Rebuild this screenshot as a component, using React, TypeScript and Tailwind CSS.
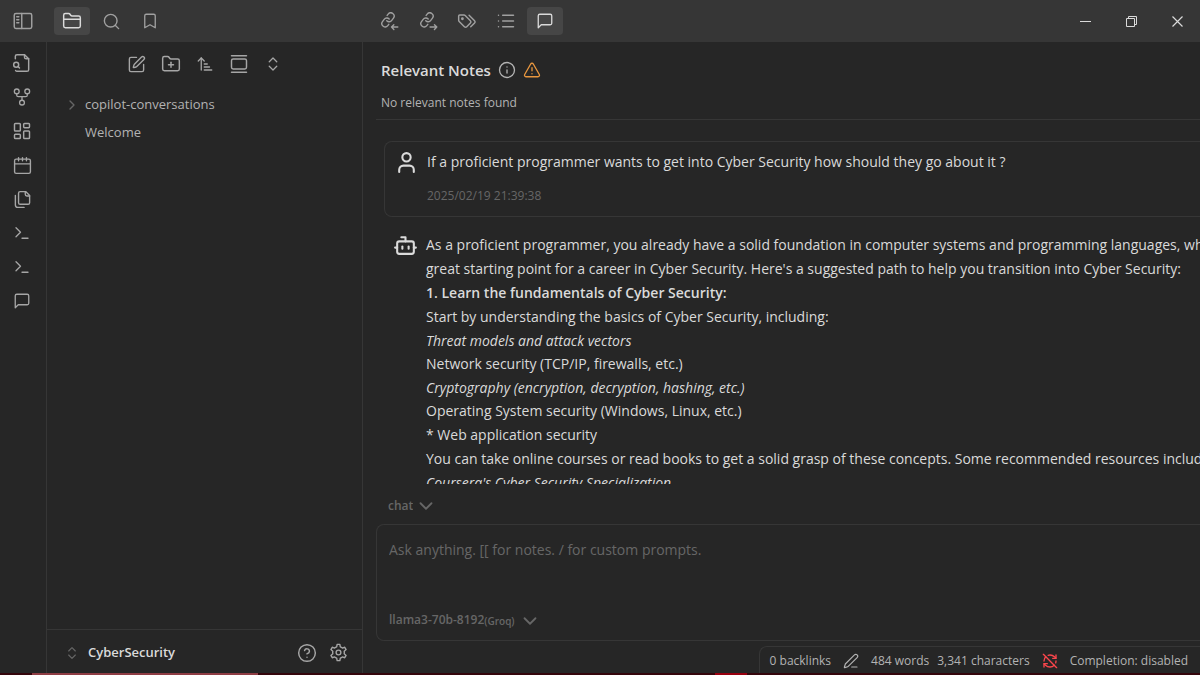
import type { ReactNode } from "react";
import {
  ArrowUpNarrowWide,
  Bookmark,
  Bot,
  ChevronDown,
  ChevronRight,
  ChevronsUpDown,
  CircleQuestionMark,
  FolderClosed,
  FolderPlus,
  GalleryVertical,
  Info,
  LayoutDashboard,
  List,
  PenLine,
  RefreshCwOff,
  Search,
  SquarePen,
  Terminal,
  TriangleAlert,
  User,
} from "lucide-react";
import clsx from "clsx";

type GlyphProps = { size?: number; children?: ReactNode };

const Glyph = ({ size = 18, children }: GlyphProps) => (
  <svg
    width={size}
    height={size}
    viewBox="0 0 24 24"
    fill="none"
    stroke="currentColor"
    strokeWidth={1.75}
    strokeLinecap="round"
    strokeLinejoin="round"
    aria-hidden="true"
  >
    {children}
  </svg>
);

const SidebarIcon = () => (
  <Glyph size={20}>
    <rect x="1.5" y="3" width="21" height="18" rx="2" />
    <path d="M10.5 3v18M4.5 7h2.500M4.500 10.500h2.500M4.500 14h2.500" />
  </Glyph>
);

const MessageIcon = () => (
  <Glyph>
    <path d="M21 15a2 2 0 0 1-2 2H7l-4 4V5a2 2 0 0 1 2-2h14a2 2 0 0 1 2 2z" />
  </Glyph>
);

const FileSearchIcon = () => (
  <Glyph size={20}>
    <path d="M15 2v3a2 2 0 0 0 2 2h3" />
    <path d="M4.3 21a2 2 0 0 0 1.7 1h12a2 2 0 0 0 2-2V7l-5-5H6a2 2 0 0 0-2 2v3" />
    <path d="m9 18-1.8-1.8" />
    <circle cx="5" cy="14" r="3" />
  </Glyph>
);

const GraphIcon = () => (
  <Glyph>
    <circle cx="5" cy="4.5" r="3.2" />
    <circle cx="19" cy="4.5" r="3.2" />
    <circle cx="12" cy="19.5" r="3.2" />
    <path d="M5 7.7v1.8a2 2 0 0 0 2 2h10a2 2 0 0 0 2-2V7.7M12 11.5v4.8" />
  </Glyph>
);

const CalendarIcon = () => (
  <Glyph size={19}>
    <rect x="2" y="4" width="20" height="18" rx="2" />
    <path d="M7 2v4M12 2v4M17 2v4M2 10h20" />
  </Glyph>
);

const FilesIcon = () => (
  <Glyph size={19}>
    <path d="M16 2H9a2 2 0 0 0-2 2v12a2 2 0 0 0 2 2h10a2 2 0 0 0 2-2V7z" />
    <path d="M15.5 2v3.500a2 2 0 0 0 2 2H21" />
    <path d="M3 7v12a3 3 0 0 0 3 3h8" />
  </Glyph>
);

const TagsIcon = () => (
  <Glyph size={20}>
    <path d="M2 6v5.200a2 2 0 0 0 .6 1.400l6.300 6.300a2 2 0 0 0 2.800 0l4.400-4.400a2 2 0 0 0 0-2.800L9.800 5.400A2 2 0 0 0 8.400 4.800H3.200A1.200 1.200 0 0 0 2 6z" />
    <path d="m14.500 5 6.600 6.600a2 2 0 0 1 0 2.800l-4.600 4.600" />
    <circle cx="6.500" cy="9.300" r=".8" fill="currentColor" />
  </Glyph>
);

// chain link with an arrow for the incoming / outgoing link panes
const LinksIcon = ({ incoming }: { incoming?: boolean }) => (
  <Glyph size={19}>
    <g transform="rotate(-8 9 10) scale(.84)" strokeWidth={2.1}>
      <path d="M10 13a5 5 0 0 0 7.540.540l3-3a5 5 0 0 0-7.070-7.070l-1.720 1.710" />
      <path d="M14 11a5 5 0 0 0-7.540-.540l-3 3a5 5 0 0 0 7.070 7.070l1.710-1.710" />
    </g>
    <path
      d={incoming ? "M22.500 19h-8M17.500 16l-3 3 3 3" : "M14 19h8.500M19.500 16l3 3-3 3"}
    />
  </Glyph>
);

const GearIcon = () => (
  <Glyph size={19}>
    <path d="M10.300 1.800h3.400l.6 3.100a7.500 7.500 0 0 1 2.600 1.500l3-1 1.700 2.900-2.400 2.100a7.500 7.500 0 0 1 0 3.200l2.400 2.100-1.700 2.900-3-1a7.500 7.500 0 0 1-2.600 1.500l-.6 3.100h-3.400l-.6-3.100a7.500 7.500 0 0 1-2.600-1.500l-3 1-1.700-2.900 2.400-2.100a7.500 7.500 0 0 1 0-3.200L2.400 8.300l1.700-2.900 3 1a7.500 7.500 0 0 1 2.600-1.500z" />
    <circle cx="12" cy="12" r="3" />
  </Glyph>
);

const lucide = { size: 18, strokeWidth: 1.75 };

const leftTabs = [
  { label: "Files", icon: <FolderClosed size={20} strokeWidth={1.75} />, active: true },
  { label: "Search", icon: <Search size={19} strokeWidth={1.75} /> },
  { label: "Bookmarks", icon: <Bookmark {...lucide} /> },
];

const rightTabs = [
  { label: "Backlinks", icon: <LinksIcon incoming /> },
  { label: "Outgoing links", icon: <LinksIcon /> },
  { label: "Tags", icon: <TagsIcon /> },
  { label: "Outline", icon: <List size={20} strokeWidth={1.75} /> },
  { label: "Copilot", icon: <MessageIcon />, active: true },
];

const ribbonItems = [
  { label: "Open quick switcher", icon: <FileSearchIcon /> },
  { label: "Open graph view", icon: <GraphIcon /> },
  { label: "Create new canvas", icon: <LayoutDashboard size={20} strokeWidth={1.75} /> },
  { label: "Open daily note", icon: <CalendarIcon /> },
  { label: "Insert template", icon: <FilesIcon /> },
  { label: "Command palette", icon: <Terminal {...lucide} /> },
  { label: "Open terminal", icon: <Terminal {...lucide} /> },
  { label: "Open Copilot chat", icon: <MessageIcon /> },
];

const fileActions = [
  { label: "New note", icon: <SquarePen size={19} strokeWidth={1.75} /> },
  { label: "New folder", icon: <FolderPlus size={20} strokeWidth={1.75} /> },
  { label: "Change sort order", icon: <ArrowUpNarrowWide {...lucide} /> },
  { label: "Auto-reveal current file", icon: <GalleryVertical size={20} strokeWidth={1.75} /> },
  { label: "Expand all", icon: <ChevronsUpDown {...lucide} /> },
];

type Tab = { label: string; icon: ReactNode; active?: boolean };

const TabButtons = ({ tabs }: { tabs: Tab[] }) => (
  <div className="flex gap-[3px]">
    {tabs.map((tab) => (
      <button
        key={tab.label}
        aria-label={tab.label}
        className={clsx(
          "flex h-7 w-9 items-center justify-center rounded",
          tab.active ? "bg-[#464646] text-[#dadada]" : "text-[#a0a0a0]"
        )}
      >
        {tab.icon}
      </button>
    ))}
  </div>
);

const TitleBar = () => (
  <header className="flex h-[42px] shrink-0 items-center bg-[#363636]">
    <div className="flex w-[363px] shrink-0 items-center">
      <button
        aria-label="Toggle sidebar"
        className="mr-2 flex w-[46px] items-center justify-center text-[#a0a0a0]"
      >
        <SidebarIcon />
      </button>
      <TabButtons tabs={leftTabs} />
    </div>
    <div className="flex flex-1 items-center justify-between pl-2">
      <TabButtons tabs={rightTabs} />
      <div className="flex text-[#dadada]">
        <button aria-label="Minimize" className="flex w-[46px] items-center justify-center">
          <svg width="11" height="11" viewBox="0 0 11 11" stroke="currentColor">
            <path d="M0 5.500h11" />
          </svg>
        </button>
        <button aria-label="Restore" className="flex w-[46px] items-center justify-center">
          <svg width="11" height="11" viewBox="0 0 11 11" fill="none" stroke="currentColor">
            <path d="M.5 2.500h8v8h-8zM2.500 2.500v-2h8v8h-2" />
          </svg>
        </button>
        <button aria-label="Close" className="flex w-[46px] items-center justify-center">
          <svg width="11" height="11" viewBox="0 0 11 11" stroke="currentColor" strokeWidth="1.2">
            <path d="m.5.5 10 10M10.500.5l-10 10" />
          </svg>
        </button>
      </div>
    </div>
  </header>
);

const Ribbon = () => (
  <nav className="flex w-[47px] shrink-0 flex-col items-center gap-2 border-r border-[#363636] pt-2 pr-0.5 text-[#a6a6a6]">
    {ribbonItems.map((item) => (
      <button
        key={item.label}
        aria-label={item.label}
        className="flex h-[26px] w-[26px] items-center justify-center"
      >
        {item.icon}
      </button>
    ))}
  </nav>
);

const FileExplorer = () => (
  <aside className="flex w-[316px] shrink-0 flex-col border-r border-[#363636]">
    <div className="flex justify-center gap-2 pt-2 text-[#a6a6a6]">
      {fileActions.map((action) => (
        <button
          key={action.label}
          aria-label={action.label}
          className="flex h-7 w-[26px] items-center justify-center"
        >
          {action.icon}
        </button>
      ))}
    </div>
    <div className="flex-1 pt-[13px] text-[13px] text-[#b3b3b3]">
      <button className="flex h-7 w-full items-center pl-[17px]">
        <ChevronRight size={16} strokeWidth={2} className="mr-[5px] text-[#666]" />
        copilot-conversations
      </button>
      <button className="flex h-7 w-full items-center pl-[38px]">Welcome</button>
    </div>
    <div className="flex h-11 items-center border-t border-[#363636] pt-0.5 pr-[14px] pl-[17px]">
      <button className="flex flex-1 items-center gap-2 text-[13px] font-semibold text-[#dadada]">
        <ChevronsUpDown size={16} strokeWidth={1.75} className="text-[#666]" />
        CyberSecurity
      </button>
      <div className="flex gap-3 text-[#a6a6a6]">
        <button aria-label="Help">
          <CircleQuestionMark size={20} strokeWidth={1.75} />
        </button>
        <button aria-label="Settings">
          <GearIcon />
        </button>
      </div>
    </div>
  </aside>
);

const UserMessage = () => (
  <article className="ml-2 flex rounded-l-lg border border-r-0 border-[#363636] pt-2 pb-2.5 pl-[9px]">
    <User size={25} strokeWidth={2} className="shrink-0" />
    <div className="ml-2">
      <p className="text-sm leading-6 whitespace-nowrap">
        If a proficient programmer wants to get into Cyber Security how should they go about it ?
      </p>
      <time className="mt-3 block text-xs leading-5 text-[#666]">2025/02/19 21:39:38</time>
    </div>
  </article>
);

const BotMessage = () => (
  <article className="mt-4 flex pl-[17px]">
    <Bot size={25} strokeWidth={2} className="shrink-0" />
    <div className="ml-2 text-sm leading-6 whitespace-nowrap">
      <p className="leading-6">
        As a proficient programmer, you already have a solid foundation in computer systems and
        programming languages, which is a
        <br />
        great starting point for a career in Cyber Security. Here's a suggested path to help you
        transition into Cyber Security:
      </p>
      <p>
        <strong className="font-semibold">1. Learn the fundamentals of Cyber Security:</strong>
      </p>
      <p>Start by understanding the basics of Cyber Security, including:</p>
      <p className="leading-[23px] italic">Threat models and attack vectors</p>
      <p>Network security (TCP/IP, firewalls, etc.)</p>
      <p className="leading-[23px] italic">Cryptography (encryption, decryption, hashing, etc.)</p>
      <p>Operating System security (Windows, Linux, etc.)</p>
      <p>* Web application security</p>
      <p>
        You can take online courses or read books to get a solid grasp of these concepts. Some
        recommended resources include:
      </p>
      <p className="leading-[23px] italic">Coursera's Cyber Security Specialization</p>
    </div>
  </article>
);

const ChatInput = () => (
  <form className="shrink-0 text-[#666]">
    <div className="flex h-10 items-center pt-[3px] pl-3 text-xs font-semibold">
      <select
        aria-label="Chat mode"
        className="appearance-none [field-sizing:content]"
        defaultValue="chat"
      >
        <option value="chat">chat</option>
      </select>
      <ChevronDown size={22} strokeWidth={2} className="ml-0.5" />
    </div>
    <div className="rounded-l-lg border border-r-0 border-[#363636] px-3 pt-[13px]">
      <textarea
        aria-label="Message"
        placeholder="Ask anything. [[ for notes. / for custom prompts."
        className="block h-[72px] w-full resize-none text-sm leading-6 outline-none placeholder:text-[#666]"
      />
      <div className="flex h-[30px] items-start text-xs font-semibold">
        <select
          id="model"
          className="appearance-none leading-5 [field-sizing:content]"
          defaultValue="llama3-70b-8192"
        >
          <option value="llama3-70b-8192">llama3-70b-8192</option>
        </select>
        <label htmlFor="model" className="text-[10px] leading-[22px]">
          (Groq)
        </label>
        <ChevronDown size={22} strokeWidth={2} className="ml-1" />
      </div>
    </div>
  </form>
);

const CopilotPane = () => (
  <main className="flex min-w-0 flex-1 flex-col pb-8 pl-[13px] text-[#dadada]">
    <section className="shrink-0 border-b border-[#363636] pt-4 pb-1.5 pl-[5px]">
      <div className="flex items-center">
        <h1 className="text-[15px] leading-6 font-semibold">Relevant Notes</h1>
        <Info size={18} strokeWidth={1.75} className="ml-[7px] text-[#b3b3b3]" />
        <TriangleAlert size={18} strokeWidth={1.75} className="ml-[7px] text-[#e9973f]" />
      </div>
      <p className="mt-[11px] text-xs leading-5 text-[#b3b3b3]">No relevant notes found</p>
    </section>
    <div className="min-h-0 flex-1 overflow-hidden pt-[21px]">
      <UserMessage />
      <BotMessage />
    </div>
    <ChatInput />
  </main>
);

const StatusBar = () => (
  <footer className="absolute right-0 bottom-0 flex h-[27px] items-center rounded-tl-lg border-t border-l border-[#363636] bg-[#262626] pt-0.5 pr-3 pl-2.5 text-xs text-[#b3b3b3]">
    <span>0 backlinks</span>
    <PenLine size={16} strokeWidth={1.75} className="ml-3" />
    <span className="ml-3">484 words</span>
    <span className="ml-2">3,341 characters</span>
    <RefreshCwOff size={16} strokeWidth={2} className="ml-3 text-[#fb464c]" />
    <span className="ml-3">Completion: disabled</span>
  </footer>
);

export default function App() {
  return (
    <div className="flex h-screen flex-col overflow-hidden bg-[#262626] font-['Open_Sans','Noto_Sans',sans-serif]">
      <TitleBar />
      <div className="relative flex min-h-0 flex-1">
        <Ribbon />
        <FileExplorer />
        <CopilotPane />
        <StatusBar />
      </div>
      <div className="flex h-0.5 shrink-0 bg-[#35060c]">
        <div className="ml-8 w-[226px] bg-[#8f3d44]" />
        <div className="ml-[457px] w-8 bg-[#98000f]" />
      </div>
    </div>
  );
}
